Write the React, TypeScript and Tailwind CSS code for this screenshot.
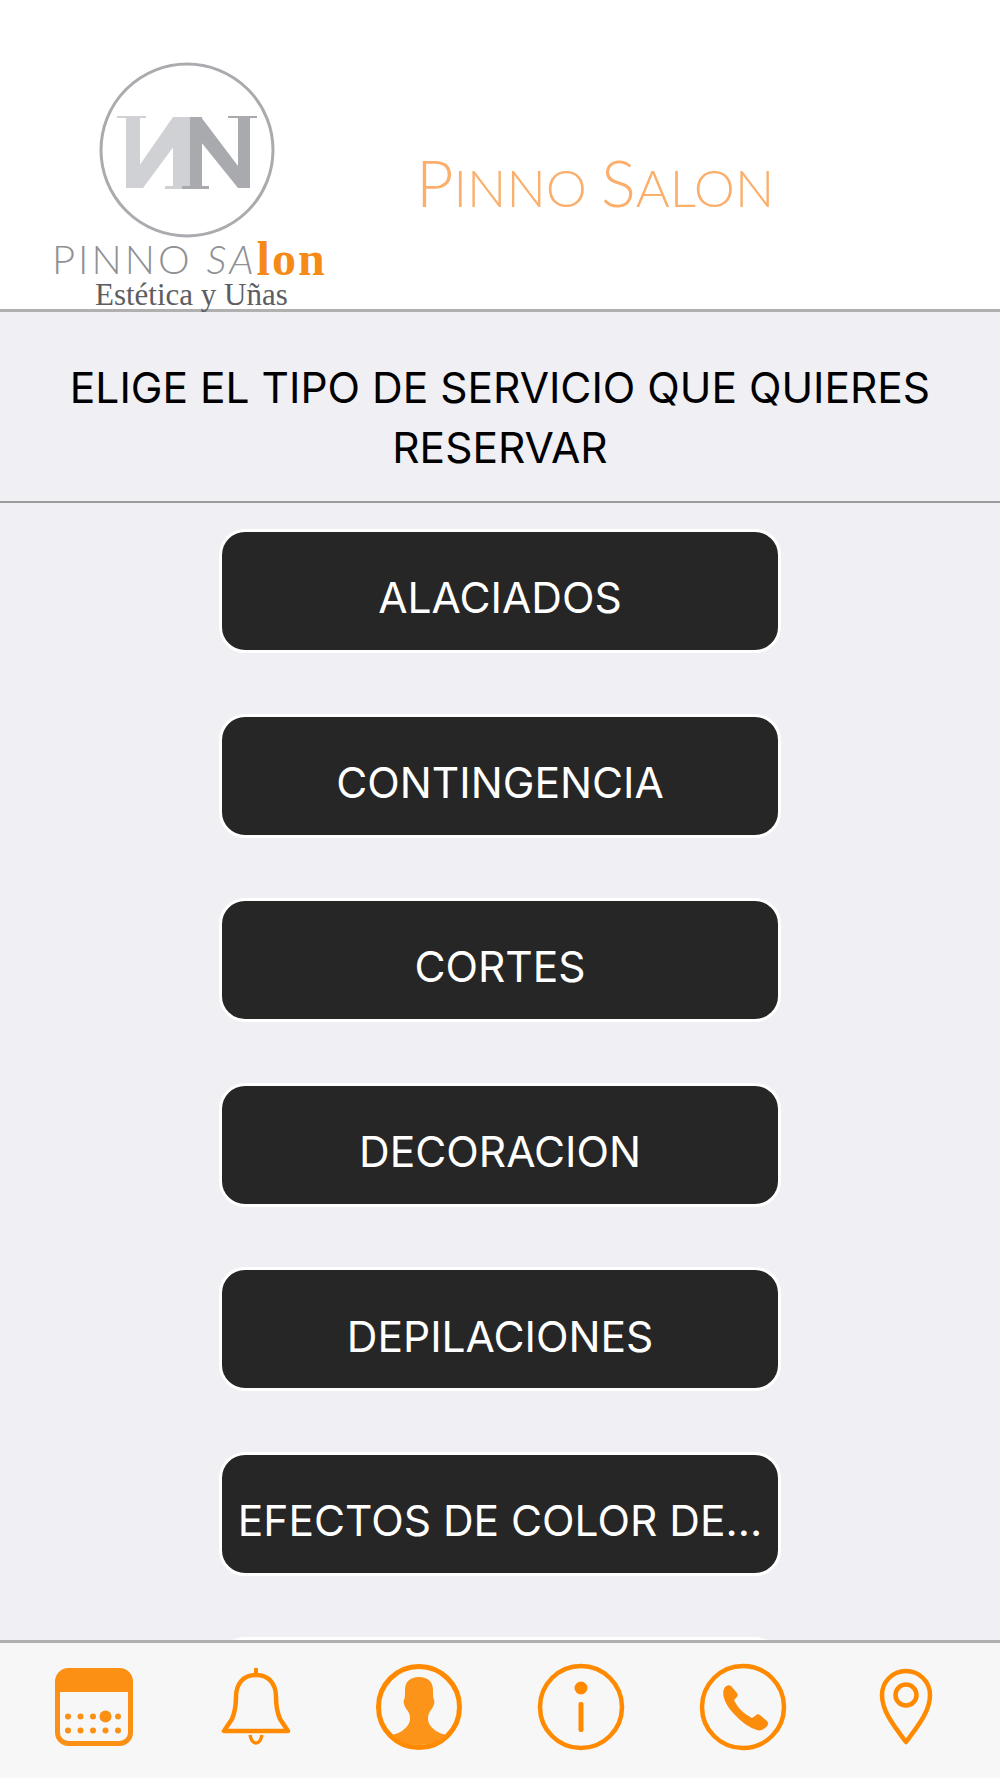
const services = [
  "ALACIADOS",
  "CONTINGENCIA",
  "CORTES",
  "DECORACION",
  "DEPILACIONES",
  "EFECTOS DE COLOR DE...",
  "",
];

function LogoMark() {
  return (
    <svg width="180" height="180" viewBox="0 0 180 180" className="block ml-[44px]">
      <circle cx="90" cy="90" r="86" fill="none" stroke="#a9abae" strokeWidth="3" />
      {/* mirrored N */}
      <g fill="#cfd1d4">
        <polygon points="42,106 76,57 80,82 46,128 42,128" />
        <rect x="29" y="57" width="14" height="71" />
        <rect x="76" y="57" width="17" height="71" />
        <rect x="20" y="56" width="29" height="2" />
        <rect x="68" y="126" width="30" height="3" />
      </g>
      {/* N */}
      <g fill="#a8aaae">
        <rect x="93" y="57" width="12" height="71" />
        <polygon points="104,57 141,106 145,128 141,128 104,82" />
        <rect x="141" y="57" width="12" height="71" />
        <rect x="85" y="126" width="27" height="3" />
        <rect x="131" y="56" width="29" height="2" />
      </g>
    </svg>
  );
}

function CalendarIcon() {
  return (
    <svg width="78" height="78" viewBox="0 0 78 78" className="text-[#fb9015]">
      <rect x="2.500" y="2.500" width="73" height="73" rx="11" fill="none" stroke="currentColor" strokeWidth="5" />
      <path d="M12 1h54a11 11 0 0 1 11 11v12H1V12A11 11 0 0 1 12 1z" fill="currentColor" />
      <g fill="currentColor">
        <circle cx="13" cy="48.500" r="3" />
        <circle cx="25.500" cy="48.500" r="3" />
        <circle cx="38" cy="48.500" r="3" />
        <circle cx="50.500" cy="48.500" r="6" />
        <circle cx="63" cy="48.500" r="3" />
        <circle cx="13" cy="62.500" r="3" />
        <circle cx="25.500" cy="62.500" r="3" />
        <circle cx="38" cy="62.500" r="3" />
        <circle cx="50.500" cy="62.500" r="3" />
        <circle cx="63" cy="62.500" r="3" />
      </g>
    </svg>
  );
}

function BellIcon() {
  return (
    <svg width="70" height="78" viewBox="0 0 70 78" fill="none" stroke="#ff8a00" strokeWidth="4.500" strokeLinejoin="round">
      <path d="M35 7c-13 0-20 9-20 22 0 9-1 15-4 22L3 63h64l-8-12c-3-7-4-13-4-22 0-13-7-22-20-22z" />
      <path d="M35 1v6" strokeLinecap="round" strokeWidth="4" />
      <path d="M29 67c1 5 3 8 6 8s5-3 6-8" strokeWidth="3.500" />
    </svg>
  );
}

function UserIcon() {
  return (
    <svg width="88" height="88" viewBox="0 0 88 88">
      <circle cx="44" cy="44" r="40.500" fill="none" stroke="#ff8a00" strokeWidth="5" />
      <path
        d="M44 14c-9 0-14 5-14 13 0 5 0 8-1 10-1 2 0 6 3 10 2 2 3 5 3 9 0 5-4 9-8 12-3 2-7 3-10 4 7 7 17 10 27 10s20-3 27-10c-3-1-7-2-10-4-4-3-8-7-8-12 0-4 1-7 3-9 3-4 4-8 3-10-1-2-1-5-1-10 0-8-5-13-14-13z"
        fill="#fb9419"
      />
    </svg>
  );
}

function InfoIcon() {
  return (
    <svg width="88" height="88" viewBox="0 0 88 88">
      <circle cx="44" cy="44" r="41" fill="none" stroke="#ff8a00" strokeWidth="4.500" />
      <circle cx="44" cy="25" r="6.500" fill="#ff8a00" />
      <rect x="41.500" y="39" width="5" height="30" rx="2" fill="#ff8a00" />
    </svg>
  );
}

function PhoneIcon() {
  return (
    <svg width="88" height="88" viewBox="0 0 88 88">
      <circle cx="44" cy="44" r="41" fill="none" stroke="#ff8a00" strokeWidth="4.500" />
      <path
        d="M25 26c1-3 5-5 7-3l6 7c1 2 1 3-1 5l-2 2c3 7 10 14 18 18l3-2c2-2 3-2 5-1l7 6c2 2 1 5-2 7-2 2-5 3-8 2-7-2-14-7-20-13-6-6-11-12-13-19-1-3-1-7 0-9z"
        fill="#fb8c0c"
      />
    </svg>
  );
}

function PinIcon() {
  return (
    <svg width="54" height="78" viewBox="0 0 54 78" fill="none" stroke="#ff8a00" strokeWidth="4.500">
      <path d="M27 74C16 59 3 44 3 27a24 24 0 0 1 48 0c0 17-13 32-24 47z" strokeLinejoin="round" />
      <circle cx="27" cy="27" r="10.500" />
    </svg>
  );
}

function App() {
  return (
    <div className="h-[1778px] w-[1000px] flex flex-col overflow-hidden bg-[#efeff4] font-['Inter','Liberation_Sans',sans-serif]">
      <header className="h-[312px] shrink-0 bg-white border-b-[3px] border-[#b0b0b0] flex items-start pt-[60px] pl-[53px]">
        <div className="w-[275px] shrink-0">
          <LogoMark />
          <div className="flex items-end h-[38px] whitespace-nowrap -ml-[1px]">
            <span className="font-['Lato',sans-serif] font-light text-[40px] leading-[38px] text-[#8f9194] tracking-[3px]">PINNO</span>
            <span className="ml-[14px] font-['Lato',sans-serif] font-light italic text-[40px] leading-[38px] text-[#8f9194] tracking-[3px]">SA</span>
            <span className="font-['Liberation_Serif',serif] font-bold text-[48px] leading-[38px] tracking-[2px] text-[#f58a17]">lon</span>
          </div>
          <p className="pl-[42px] pt-[3px] font-['Liberation_Serif',serif] text-[31px] leading-[28px] text-[#5c5e63] whitespace-nowrap">
            Estética y Uñas
          </p>
        </div>
        <h1 className="ml-[88px] mt-[90px] font-['Lato',sans-serif] font-light text-[#fab06c] leading-none whitespace-nowrap">
          <span className="text-[65px]">P</span>
          <span className="text-[52px]">INNO </span>
          <span className="text-[65px]">S</span>
          <span className="text-[52px]">ALON</span>
        </h1>
      </header>

      <section className="h-[191px] shrink-0 border-b-2 border-[#9a9a9a] flex items-center justify-center px-[30px] pt-[22px]">
        <h2 className="text-center text-[42.500px] leading-[60px] text-black">
          ELIGE EL TIPO DE SERVICIO QUE QUIERES RESERVAR
        </h2>
      </section>

      <main className="flex-1 min-h-0 overflow-hidden flex flex-col items-center gap-[60.600px] pt-[26px]">
        {services.map((name, i) => (
          <button
            key={i}
            className="w-[562px] h-[124px] shrink-0 rounded-[26px] border-[3px] border-white bg-[#262626] text-white text-[42.500px] pt-[14px] whitespace-nowrap"
          >
            {name}
          </button>
        ))}
      </main>

      <nav className="h-[138px] shrink-0 bg-[#f7f7f8] border-t-[3px] border-[#b0b0b0] grid grid-cols-6 px-[13px] items-center justify-items-center pb-[8px]">
        <CalendarIcon />
        <BellIcon />
        <UserIcon />
        <InfoIcon />
        <PhoneIcon />
        <PinIcon />
      </nav>
    </div>
  );
}

export default App;
